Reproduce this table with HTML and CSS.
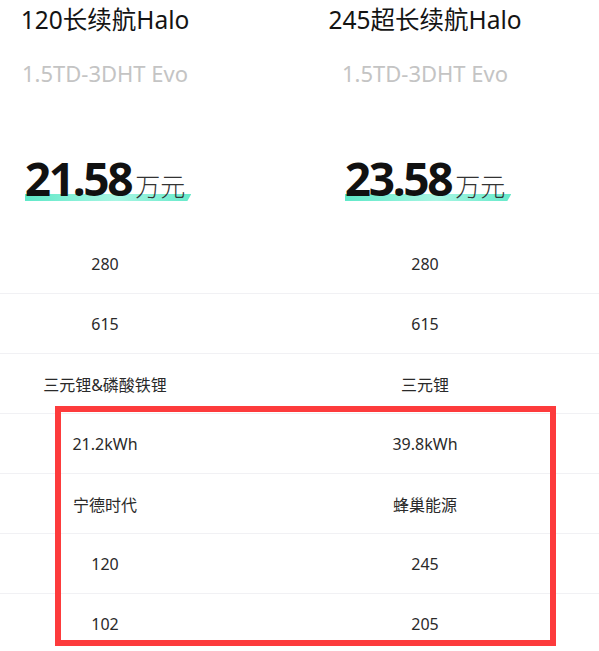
FILE: index.html
```html
<!DOCTYPE html>
<html lang="zh-CN">
<head>
<meta charset="utf-8">
<title>车型对比</title>
<link rel="stylesheet" href="styles.css">
</head>
<body>
<div class="compare">
  <div class="head">
    <div class="model">
      <div class="name">120长续航Halo</div>
      <div class="engine">1.5TD-3DHT Evo</div>
      <div class="price"><span class="num">21.58</span><span class="unit">万元</span></div>
    </div>
    <div class="model">
      <div class="name">245超长续航Halo</div>
      <div class="engine">1.5TD-3DHT Evo</div>
      <div class="price"><span class="num">23.58</span><span class="unit">万元</span></div>
    </div>
  </div>
  <div class="rows">
    <div class="row"><div class="cell">280</div><div class="cell">280</div></div>
    <div class="row"><div class="cell">615</div><div class="cell">615</div></div>
    <div class="row"><div class="cell">三元锂&amp;磷酸铁锂</div><div class="cell">三元锂</div></div>
    <div class="row"><div class="cell">21.2kWh</div><div class="cell">39.8kWh</div></div>
    <div class="row"><div class="cell">宁德时代</div><div class="cell">蜂巢能源</div></div>
    <div class="row"><div class="cell">120</div><div class="cell">245</div></div>
    <div class="row"><div class="cell">102</div><div class="cell">205</div></div>
  </div>
</div>
<div class="highlight"></div>
</body>
</html>
```
FILE: styles.css
```css
html, body {
  margin: 0;
  padding: 0;
  background: #ffffff;
  overflow: hidden;
}
body {
  font-family: "Noto Sans", "Noto Sans CJK SC", sans-serif;
  color: #222222;
}
.compare {
  margin-left: -55px;
}
.head {
  display: grid;
  grid-template-columns: 320px 320px;
  padding-top: 4px;
}
.model {
  display: flex;
  flex-direction: column;
  align-items: center;
}
.name {
  font-size: 24.5px;
  line-height: 32px;
  color: #141414;
}
.engine {
  margin-top: 22px;
  font-size: 22px;
  line-height: 30px;
  color: #c4c4c4;
}
.price {
  margin-top: 62px;
  height: 56px;
  line-height: 56px;
  position: relative;
  isolation: isolate;
  white-space: nowrap;
}
.price::after {
  content: "";
  position: absolute;
  left: 0;
  right: -6px;
  bottom: 5px;
  height: 7px;
  z-index: -1;
  background: linear-gradient(90deg, #5fe8c8 0%, #a8f6e3 55%, #66e9ca 100%);
  clip-path: polygon(0 0, 100% 0, calc(100% - 4px) 100%, 0 100%);
}
.num {
  font-size: 46px;
  font-weight: 700;
  letter-spacing: -2.3px;
  color: #111111;
}
.unit {
  margin-left: 4px;
  font-size: 25px;
  font-weight: 300;
  color: #333333;
}
.rows {
  margin-top: 28px;
}
.row {
  display: grid;
  grid-template-columns: 320px 320px;
  height: 60px;
  box-sizing: border-box;
  border-bottom: 1px solid #f1f1f4;
  align-items: center;
}
.cell {
  text-align: center;
  font-size: 16px;
  color: #2a2a2a;
}
.highlight {
  position: absolute;
  left: 55px;
  top: 406px;
  width: 501px;
  height: 240px;
  box-sizing: border-box;
  border: 6px solid #fd3b3c;
}
```
